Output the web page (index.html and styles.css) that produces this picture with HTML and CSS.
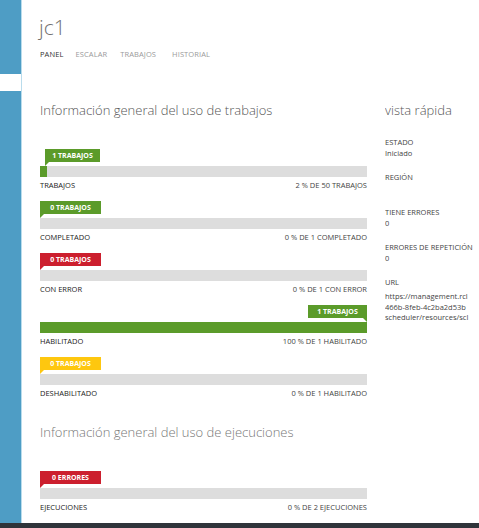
FILE: index.html
```html
<!DOCTYPE html>
<html lang="es">
<head>
<meta charset="utf-8">
<title>jc1</title>
<link rel="stylesheet" href="styles.css">
</head>
<body>
<div class="page">
  <div class="shell">
    <aside class="sidebar">
      <div class="side-top"></div>
      <div class="side-gap"></div>
      <div class="side-rest"></div>
    </aside>
    <main class="main">
      <h1 class="title">jc1</h1>
      <nav class="tabs">
        <span class="tab active">PANEL</span>
        <span class="tab">ESCALAR</span>
        <span class="tab">TRABAJOS</span>
        <span class="tab">HISTORIAL</span>
      </nav>
      <div class="columns">
        <section class="usage">
          <h2 class="heading">Información general del uso de trabajos</h2>
          <div class="metric first">
            <div class="tag-row"><span class="tag green" style="margin-left:5px">1 TRABAJOS</span></div>
            <div class="bar"><div class="fill green" style="width:2%"></div></div>
            <div class="labels"><span>TRABAJOS</span><span class="right">2 % DE 50 TRABAJOS</span></div>
          </div>
          <div class="metric">
            <div class="tag-row"><span class="tag green">0 TRABAJOS</span></div>
            <div class="bar"></div>
            <div class="labels"><span>COMPLETADO</span><span class="right">0 % DE 1 COMPLETADO</span></div>
          </div>
          <div class="metric">
            <div class="tag-row"><span class="tag red">0 TRABAJOS</span></div>
            <div class="bar"></div>
            <div class="labels"><span>CON ERROR</span><span class="right">0 % DE 1 CON ERROR</span></div>
          </div>
          <div class="metric">
            <div class="tag-row end"><span class="tag green tail-right">1 TRABAJOS</span></div>
            <div class="bar"><div class="fill green" style="width:100%"></div></div>
            <div class="labels"><span>HABILITADO</span><span class="right">100 % DE 1 HABILITADO</span></div>
          </div>
          <div class="metric">
            <div class="tag-row"><span class="tag yellow">0 TRABAJOS</span></div>
            <div class="bar"></div>
            <div class="labels"><span>DESHABILITADO</span><span class="right">0 % DE 1 HABILITADO</span></div>
          </div>
          <h2 class="heading second">Información general del uso de ejecuciones</h2>
          <div class="metric runs">
            <div class="tag-row"><span class="tag red">0 ERRORES</span></div>
            <div class="bar"></div>
            <div class="labels"><span>EJECUCIONES</span><span class="right">0 % DE 2 EJECUCIONES</span></div>
          </div>
        </section>
        <section class="quick">
          <h2 class="heading">vista rápida</h2>
          <dl class="props">
            <div class="prop"><dt>ESTADO</dt><dd>Iniciado</dd></div>
            <div class="prop"><dt>REGIÓN</dt><dd>&nbsp;</dd></div>
            <div class="prop"><dt>TIENE ERRORES</dt><dd>0</dd></div>
            <div class="prop"><dt>ERRORES DE REPETICIÓN</dt><dd>0</dd></div>
            <div class="prop"><dt>URL</dt><dd class="url"><span>https://management.rcl</span><span>466b-8feb-4c2ba2d53b</span><span>scheduler/resources/scl</span></dd></div>
          </dl>
        </section>
      </div>
    </main>
  </div>
  <footer class="footer"></footer>
</div>
</body>
</html>
```

FILE: styles.css
```css
* { box-sizing: border-box; }
html, body { margin: 0; padding: 0; }
body {
  width: 479px;
  height: 528px;
  overflow: hidden;
  background: #ffffff;
  font-family: "Open Sans", "Noto Sans", "Liberation Sans", sans-serif;
  color: #333;
}
.page {
  display: flex;
  flex-direction: column;
  height: 528px;
}
.shell {
  flex: 1;
  display: flex;
  min-height: 0;
}
.sidebar {
  width: 22px;
  flex: none;
  display: flex;
  flex-direction: column;
  border-right: 1px solid #b9dcec;
}
.side-top { height: 74px; background: #4e9dc5; }
.side-gap { height: 17px; background: #ffffff; }
.side-rest { flex: 1; background: #4e9dc5; }
.main {
  flex: 1;
  padding-left: 18px;
  min-width: 0;
}
.title {
  margin: 14px 0 0 -1px;
  font-size: 21px;
  font-weight: 300;
  color: #707070;
  line-height: 26px;
  height: 26px;
}
.tabs {
  display: flex;
  gap: 12px;
  margin-top: 8px;
  height: 12px;
  align-items: center;
}
.tab {
  font-size: 7.5px;
  color: #9a9a9a;
  letter-spacing: 0.1px;
}
.tab:nth-child(3) { margin-left: 1px; }
.tab:nth-child(4) { margin-left: 4px; }
.tab.active { color: #333; }
.columns {
  display: flex;
  gap: 18px;
  margin-top: 40px;
}
.usage { width: 327px; flex: none; }
.quick { flex: 1; min-width: 0; overflow: hidden; }
.heading {
  margin: 0;
  font-size: 13px;
  font-weight: 300;
  color: #555;
  line-height: 20px;
  height: 20px;
  white-space: nowrap;
}
.heading.second { margin-top: 23px; color: #777; }
.metric { margin-top: 10px; height: 42px; }
.metric.first { margin-top: 29px; }
.metric.runs { margin-top: 29px; }
.tag-row {
  height: 13px;
  display: flex;
  margin-bottom: 4px;
}
.tag-row.end { justify-content: flex-end; }
.tag {
  position: relative;
  display: inline-block;
  width: 61px;
  height: 13px;
  line-height: 13px;
  font-size: 7px;
  font-weight: 700;
  color: #fff;
  text-align: center;
}
.tag::after {
  content: "";
  position: absolute;
  left: 0;
  top: 13px;
  width: 0;
  height: 0;
  border-right: 4px solid transparent;
}
.tag.tail-right::after {
  left: auto;
  right: 0;
  border-right: 0;
  border-left: 4px solid transparent;
}
.tag.green { background: #5b9b2a; width: 55px; }
.tag.green::after { border-top: 4px solid #5b9b2a; }
.tag.red { background: #cc1f2e; }
.tag.red::after { border-top: 4px solid #cc1f2e; }
.tag.yellow { background: #fec70f; }
.tag.yellow::after { border-top: 4px solid #fec70f; }
.tag-row:not(.end) .tag.green:not([style]) { width: 61px; }
.tag-row.end .tag { width: 59px; }
.bar {
  height: 11px;
  background: #dddddd;
}
.fill { height: 100%; }
.fill.green { background: #5b9b2a; }
.labels {
  display: flex;
  justify-content: space-between;
  margin-top: 3px;
  font-size: 7.5px;
  line-height: 11px;
  color: #222;
}
.labels .right { color: #444; }
.props { margin: 17px 0 0 0; }
.prop { height: 35px; }
.prop dt {
  font-size: 7.5px;
  line-height: 11px;
  color: #444;
  white-space: nowrap;
}
.prop dd {
  margin: 0;
  font-size: 7.5px;
  line-height: 11px;
  color: #444;
}
.prop dd.url {
  margin-top: 3px;
  display: flex;
  flex-direction: column;
  line-height: 10.5px;
}
.url span { white-space: nowrap; }
.footer {
  height: 5px;
  flex: none;
  background: #2f343a;
}
```
